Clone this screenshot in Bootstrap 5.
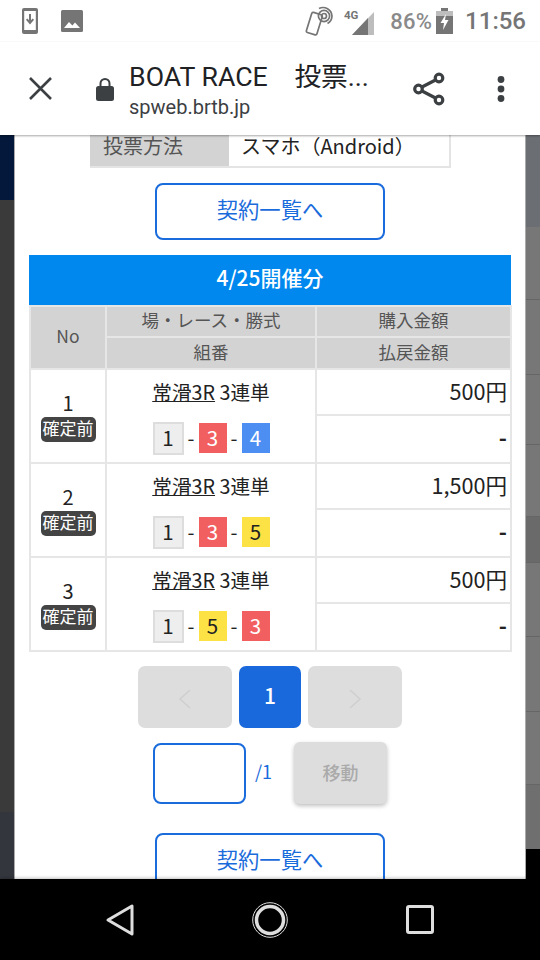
<!DOCTYPE html>
<html lang="ja">
<head>
<meta charset="utf-8">
<title>BOAT RACE 投票</title>
<link rel="stylesheet" href="https://cdn.jsdelivr.net/npm/bootstrap@5.3.0/dist/css/bootstrap.min.css">
<style>
html,body{margin:0;height:960px;width:540px;overflow:hidden;background:#000}
body{font-family:"Noto Sans CJK JP","Noto Sans",sans-serif;color:#222}
.shell{width:540px;height:960px}
.statusbar{height:42px;background:#fff;padding:0 14px 0 21px;color:#757575;font-family:Roboto,"Noto Sans",sans-serif}
.stat-photo{margin-left:22px}
.stat-pct{font-size:22px;font-weight:500;margin-left:14px;letter-spacing:.2px;color:#8a8a8a}
.stat-time{font-size:24px;font-weight:500;margin-left:12px;line-height:1}
.toolbar{height:93px;background:#fff;padding-left:29px;position:relative;z-index:3;box-shadow:0 1px 2px rgba(0,0,0,.35);font-family:Roboto,"Noto Sans CJK JP",sans-serif}
.tb-lock{margin-left:44px}
.tb-text{margin-left:15px;width:254px;padding-top:3px}
.tb-title{font-size:26.7px;line-height:30px;color:#202124;white-space:pre}
.tb-url{font-size:20px;line-height:24px;color:#3c4043;margin-top:3px}
.tb-share{margin-left:30px}
.tb-dots{margin-left:52px}
.stage{height:744px}
.strip{width:14px;flex:none}
.strip div{width:100%}
.sheet{width:512px;flex:none;background:#fff;overflow:hidden;border-left:1px solid #aaa;border-right:1px solid #aaa;padding:0 14px}
.info-row{width:361px;height:33px;margin-left:61px;border:solid #e4e4e4;border-width:0 2px 2px 0;font-size:20px;line-height:20px}
.info-k{width:139px;background:#d3d3d3;color:#555;padding:1px 0 0 13px}
.info-v{flex:1;padding:1px 0 0 12px;background:#fff}
.list-btn{display:block;width:230px;height:57px;margin:15px auto;border:2px solid #1a6bdb;border-radius:8px;color:#1a6bdb;font-size:21.3px;line-height:47px;padding:0;background:#fff}
.list-btn:hover{color:#1a6bdb;background:#fff;border-color:#1a6bdb}
.race-head{background:#0088ee;color:#fff;font-weight:500;height:50px;line-height:44px;text-align:center;font-size:21px;width:482px}
.race-table{width:481px;table-layout:fixed;border-collapse:collapse;margin:0;--bs-table-border-color:#e6e6e6}
.race-table th,.race-table td{border:2px solid #e6e6e6;padding:0;vertical-align:middle;text-align:center;color:#222}
.race-table th{background:#d3d3d3;color:#555;font-weight:400;font-size:17.5px;height:31px;line-height:20px;padding-bottom:3px}
.race-table tr.head-low th{height:32px}
.race-table td.money{height:46px;text-align:right;padding:0 3px 3px 0;font-size:21.6px;line-height:24px}
.race-table td.dash{height:48px;font-weight:700;font-size:22px;padding-bottom:6px}
.race-table td.race-cell{padding-top:2px}
.stat-num{font-size:20px;line-height:24px;margin-bottom:2px}
.pend{display:block;width:55px;height:25px;margin:0 auto;background:#444;color:#fff;border-radius:5px;font-size:17px;line-height:22px}
.race-name{font-size:19.7px;line-height:24px;margin-bottom:18px}
.race-name a{color:#222}
.boats{gap:0;height:33px}
.boat{width:28px;height:30px;font-size:20.5px;line-height:28px;text-align:center;display:block}
.b1{width:31px;height:33px;background:#eee;border:2px solid #ddd;color:#222;line-height:27px}
.b3{background:#f25f60;color:#fff}
.b4{background:#4c8ef2;color:#fff}
.b5{background:#fde246;color:#222}
.sep{width:15px;text-align:center;font-size:20px;line-height:30px}
.pager{margin-top:14px;gap:7px}
.pg{height:62px;border:0;border-radius:7px;padding:0}
.pg-arrow,.pg-arrow:disabled{width:94px;background:#ddd;opacity:1}
.pg-cur{width:62px;background:#1a69dc;color:#fff;font-size:21px;font-weight:500;padding-bottom:2px}
.pg-cur:hover,.pg-cur:disabled{background:#1a69dc;color:#fff}
.jump{margin-top:14px;padding-left:124px}
.jump-in{width:93px;height:61px;border:2px solid #1a6bdb;border-radius:8px;background:#fff}
.jump-of{width:48px;padding:0 0 3px 9px;color:#1a6bdb;font-size:18px}
.jump-btn{width:93px;height:62px;background:#ddd;border:0;border-radius:6px;color:#aaa;font-size:18px;font-weight:500;box-shadow:0 2px 4px rgba(0,0,0,.25);padding:0 0 2px}
.jump-btn:disabled{background:#ddd;color:#aaa;opacity:1}
.list-btn.last{margin-top:29px}
.navkeys{height:81px;background:#000;position:relative;z-index:3;box-shadow:0 -1px 3px rgba(0,0,0,.25)}
.nk-back{margin-left:105px}
.nk-home{margin-left:117px}
.nk-recent{margin-left:118px}
</style>
</head>
<body>
<div class="shell d-flex flex-column">
  <div class="statusbar d-flex align-items-center">
    <svg width="18" height="28" viewBox="0 0 18 28" aria-hidden="true"><rect x="1" y="1" width="16" height="26" rx="2" fill="#757575"/><rect x="3.2" y="4" width="11.6" height="19" fill="#fff"/><path d="M9 7v8M5.7 12.2 9 16l3.3-3.8" fill="none" stroke="#757575" stroke-width="2"/></svg>
    <svg class="stat-photo" width="22" height="22" viewBox="0 0 22 22" aria-hidden="true"><rect width="22" height="22" rx="1.5" fill="#757575"/><path d="M3 18l5-6 3.400 3.600L14 12.500 19 18z" fill="#fff"/></svg>
    <div class="ms-auto d-flex align-items-center">
      <svg width="32" height="30" viewBox="0 0 32 30" aria-hidden="true"><g fill="none" stroke="#757575" stroke-width="1.7"><rect x="5" y="7" width="11" height="21" rx="1.500" transform="rotate(17 10 17)"/><circle cx="20" cy="10" r="2.500"/><circle cx="20" cy="10" r="5.600"/><path d="M15 2.500a9 9 0 0 1 13 7.500a9 9 0 0 1-4.500 7.500"/></g></svg>
      <svg class="ms-2" width="32" height="28" viewBox="0 0 32 28" aria-hidden="true"><path d="M30 5v23H8z" fill="#bdbdbd"/><path d="M24 11v17H8z" fill="#757575"/><text x="0" y="12" font-family="Roboto,sans-serif" font-size="11.500" font-weight="700" fill="#757575">4G</text></svg>
      <span class="stat-pct">86%</span>
      <svg class="ms-1" width="17" height="26" viewBox="0 0 17 26" aria-hidden="true"><path d="M5 0h7v3h5v23H0V3h5z" fill="#757575"/><path d="M0 3h17v5H0z" fill="#bdbdbd"/><path d="M10 6 4.500 15H8l-1 7 5.500-10H9z" fill="#fff"/></svg>
      <span class="stat-time">11:56</span>
    </div>
  </div>
  <div class="toolbar d-flex align-items-center">
    <svg width="23" height="23" viewBox="0 0 23 23" aria-hidden="true"><path d="M1 1l21 21M22 1 1 22" stroke="#3c4043" stroke-width="2.600" fill="none"/></svg>
    <svg class="tb-lock" width="18" height="24" viewBox="0 0 18 24" aria-hidden="true"><path d="M4.500 10V6.500a4.500 4.500 0 0 1 9 0V10" fill="none" stroke="#3c4043" stroke-width="2"/><rect x="0" y="9" width="18" height="15" rx="2.500" fill="#3c4043"/></svg>
    <div class="tb-text">
      <div class="tb-title">BOAT RACE　投票...</div>
      <div class="tb-url">spweb.brtb.jp</div>
    </div>
    <svg class="tb-share" width="32" height="34" viewBox="0 0 32 34" aria-hidden="true"><g fill="none" stroke="#3c4043" stroke-width="3.200"><circle cx="5.500" cy="17" r="3.800"/><circle cx="26" cy="6" r="3.800"/><circle cx="26" cy="28" r="3.800"/><path d="M9 15 22.500 8M9 19l13.500 7"/></g></svg>
    <svg class="tb-dots" width="8" height="26" viewBox="0 0 8 26" aria-hidden="true"><circle cx="4" cy="3.500" r="3.400" fill="#3c4043"/><circle cx="4" cy="13" r="3.400" fill="#3c4043"/><circle cx="4" cy="22.500" r="3.400" fill="#3c4043"/></svg>
  </div>
  <div class="stage d-flex">
    <div class="strip" aria-hidden="true">
      <div style="height:65px;background:#03183a"></div>
      <div style="height:612px;background:#3a3a3a"></div>
      <div style="height:67px;background:#33373d"></div>
    </div>
    <div class="sheet">
      <div class="info-row d-flex">
        <div class="info-k">投票方法</div>
        <div class="info-v">スマホ（Android）</div>
      </div>
      <a class="btn list-btn" href="#">契約一覧へ</a>
      <div class="race-head">4/25開催分</div>
      <table class="race-table">
        <colgroup><col style="width:76px"><col style="width:210px"><col style="width:195px"></colgroup>
        <thead>
          <tr><th rowspan="2">No</th><th>場・レース・勝式</th><th>購入金額</th></tr>
          <tr class="head-low"><th>組番</th><th>払戻金額</th></tr>
        </thead>
        <tbody>
          <tr>
            <td rowspan="2"><div class="stat-num">1</div><span class="pend">確定前</span></td>
            <td rowspan="2" class="race-cell">
              <div class="race-name"><a href="#">常滑3R</a> 3連単</div>
              <div class="boats d-flex justify-content-center align-items-center"><span class="boat b1">1</span><span class="sep">-</span><span class="boat b3">3</span><span class="sep">-</span><span class="boat b4">4</span></div>
            </td>
            <td class="money">500円</td>
          </tr>
          <tr><td class="money dash">-</td></tr>
          <tr>
            <td rowspan="2"><div class="stat-num">2</div><span class="pend">確定前</span></td>
            <td rowspan="2" class="race-cell">
              <div class="race-name"><a href="#">常滑3R</a> 3連単</div>
              <div class="boats d-flex justify-content-center align-items-center"><span class="boat b1">1</span><span class="sep">-</span><span class="boat b3">3</span><span class="sep">-</span><span class="boat b5">5</span></div>
            </td>
            <td class="money">1,500円</td>
          </tr>
          <tr><td class="money dash">-</td></tr>
          <tr>
            <td rowspan="2"><div class="stat-num">3</div><span class="pend">確定前</span></td>
            <td rowspan="2" class="race-cell">
              <div class="race-name"><a href="#">常滑3R</a> 3連単</div>
              <div class="boats d-flex justify-content-center align-items-center"><span class="boat b1">1</span><span class="sep">-</span><span class="boat b5">5</span><span class="sep">-</span><span class="boat b3">3</span></div>
            </td>
            <td class="money">500円</td>
          </tr>
          <tr><td class="money dash">-</td></tr>
        </tbody>
      </table>
      <div class="pager d-flex justify-content-center">
        <button class="btn pg pg-arrow" disabled aria-label="前へ"><svg width="14" height="20" viewBox="0 0 14 20" aria-hidden="true"><path d="M12 1 2 10l10 9" fill="none" stroke="#cfcfcf" stroke-width="1.500"/></svg></button>
        <button class="btn pg pg-cur">1</button>
        <button class="btn pg pg-arrow" disabled aria-label="次へ"><svg width="14" height="20" viewBox="0 0 14 20" aria-hidden="true"><path d="m2 1 10 9-10 9" fill="none" stroke="#cfcfcf" stroke-width="1.500"/></svg></button>
      </div>
      <div class="jump d-flex align-items-center">
        <input class="jump-in" type="text" aria-label="ページ">
        <span class="jump-of">/1</span>
        <button class="btn jump-btn" disabled>移動</button>
      </div>
      <a class="btn list-btn last" href="#">契約一覧へ</a>
    </div>
    <div class="strip" aria-hidden="true">
      <div style="height:92px;background:#6b6f74"></div>
      <div style="height:73px;background:#777;border-bottom:1px solid #666"></div>
      <div style="height:75px;background:#777;border-bottom:1px solid #666"></div>
      <div style="height:70px;background:#777;border-bottom:1px solid #666"></div>
      <div style="height:72px;background:#777;border-bottom:1px solid #666"></div>
      <div style="height:46px;background:#6a6a6a;border-bottom:1px solid #666"></div>
      <div style="height:74px;background:#777;border-bottom:1px solid #666"></div>
      <div style="height:75px;background:#777;border-bottom:1px solid #666"></div>
      <div style="height:73px;background:#777;border-bottom:1px solid #666"></div>
      <div style="height:64px;background:#6f6f6f"></div>
    </div>
  </div>
  <div class="navkeys d-flex align-items-center">
    <svg class="nk-back" width="30" height="34" viewBox="0 0 30 34" aria-hidden="true"><path d="M27 3v28L3 17z" fill="none" stroke="#dedede" stroke-width="3" stroke-linejoin="round"/></svg>
    <svg class="nk-home" width="36" height="36" viewBox="0 0 36 36" aria-hidden="true"><circle cx="18" cy="18" r="17.300" fill="none" stroke="#dedede" stroke-width="1"/><circle cx="18" cy="18" r="13.500" fill="none" stroke="#dedede" stroke-width="3.500"/></svg>
    <svg class="nk-recent" width="28" height="29" viewBox="0 0 28 29" aria-hidden="true"><rect x="1.500" y="1.500" width="25" height="26" rx="1.500" fill="none" stroke="#dedede" stroke-width="3"/></svg>
  </div>
</div>
</body>
</html>
